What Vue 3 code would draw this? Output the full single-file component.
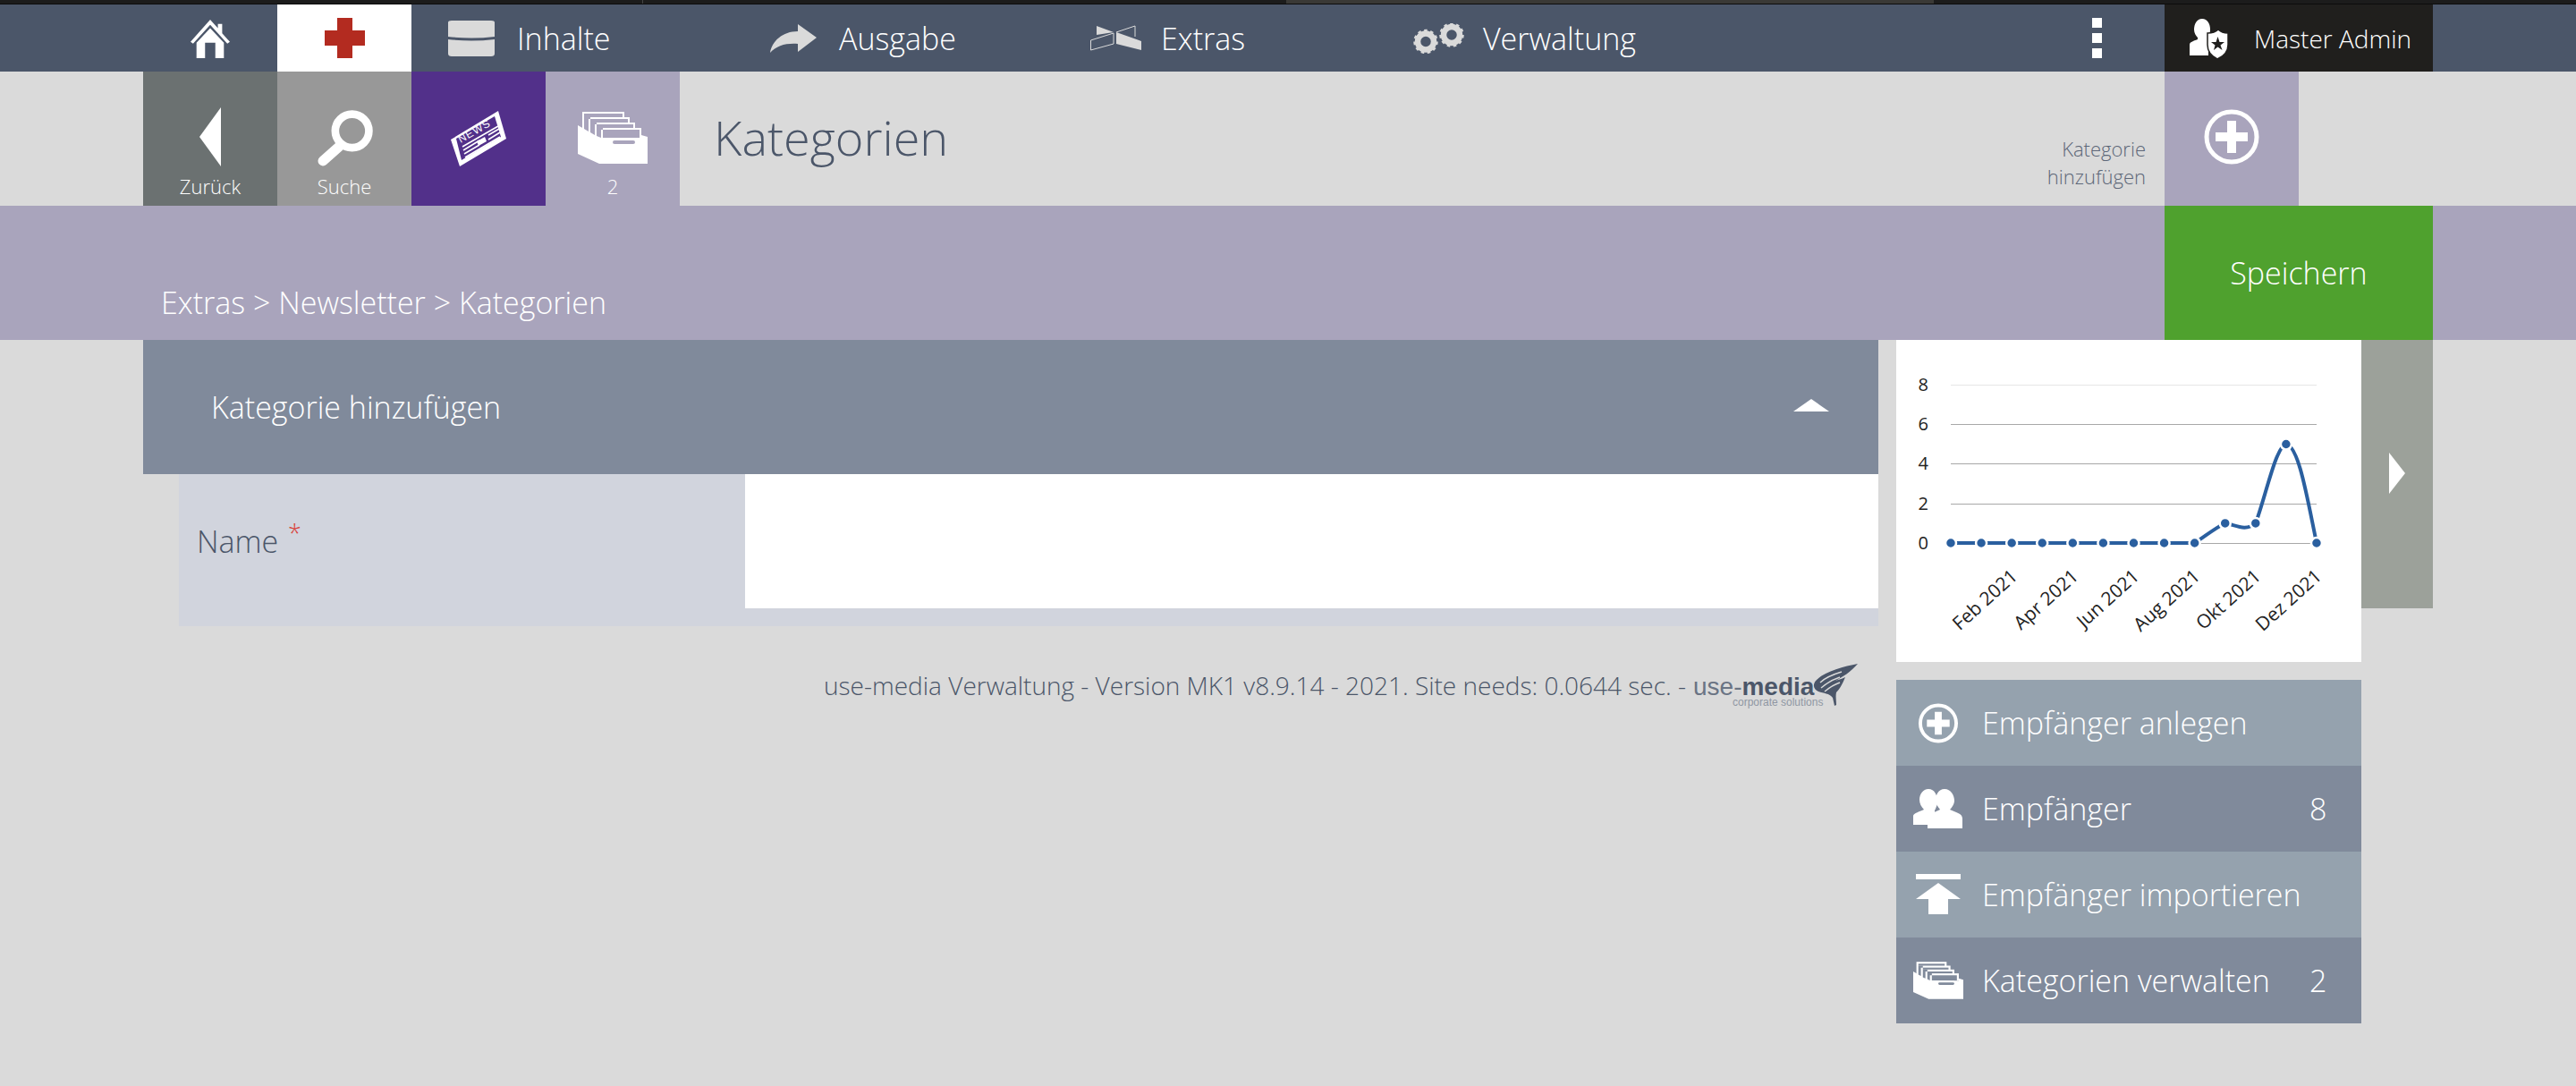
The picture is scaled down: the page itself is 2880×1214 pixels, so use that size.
<script setup>
const navItems = [
  { label: 'Inhalte', icon: 'db' },
  { label: 'Ausgabe', icon: 'share' },
  { label: 'Extras', icon: 'extras' },
  { label: 'Verwaltung', icon: 'gears' },
]
const sideItems = [
  { label: 'Empfänger anlegen', icon: 'plus', cls: 'light' },
  { label: 'Empfänger', icon: 'users', count: 8, cls: 'dark' },
  { label: 'Empfänger importieren', icon: 'import', cls: 'light' },
  { label: 'Kategorien verwalten', icon: 'box', count: 2, cls: 'dark' },
]
const ticksY = [
  { v: 8, y: 50 },
  { v: 6, y: 94 },
  { v: 4, y: 138 },
  { v: 2, y: 183 },
  { v: 0, y: 227 },
]
const xs = Array.from({ length: 13 }, (_, i) => 61 + i * 34.08)
const vals = [0, 0, 0, 0, 0, 0, 0, 0, 0, 1, 1, 5, 0]
const pts = xs.map((x, i) => ({ x, y: 227 - vals[i] * 22.1 }))
const xLabels = [
  { t: 'Feb 2021', x: 137 },
  { t: 'Apr 2021', x: 205 },
  { t: 'Jun 2021', x: 273 },
  { t: 'Aug 2021', x: 341 },
  { t: 'Okt 2021', x: 409 },
  { t: 'Dez 2021', x: 477 },
]
</script>

<template>
  <div class="page">
    <div class="strip"><span class="s1"></span><span class="s2"></span><span class="s3"></span></div>

    <header class="nav">
      <div class="nav-cell home">
        <svg width="46" height="44" viewBox="0 0 48 46"><path d="M24 1 L33 11 V6 H38 V17 L47 27 L44 29 L24 7 L4 29 L1 27 Z M8 28 L24 11 L40 28 V46 H30 V28 H18 V46 H8 Z" fill="#fff"/></svg>
      </div>
      <div class="nav-cell cross">
        <svg width="45" height="45" viewBox="0 0 45 45"><path d="M14 0 H31 V14 H45 V31 H31 V45 H14 V31 H0 V14 H14 Z" fill="#b32b20"/></svg>
      </div>
      <div v-for="n in navItems" :key="n.label" class="nav-item" :class="'ni-' + n.icon">
        <svg v-if="n.icon === 'db'" width="52" height="40" viewBox="0 0 52 40">
          <path d="M0 2 Q0 0 4 0 H48 Q52 0 52 2 V18 Q26 21 0 18 Z M0 21 Q26 24 52 21 V37 Q52 40 48 40 H4 Q0 40 0 37 Z" fill="#dadada"/>
        </svg>
        <svg v-else-if="n.icon === 'share'" width="52" height="32" viewBox="0 0 52 32">
          <path d="M31 0 L52 15 L31 31 V22 C18 21 7 24 0 32 C2 19 14 8 31 8 Z" fill="#dadada"/>
        </svg>
        <svg v-else-if="n.icon === 'extras'" width="57" height="29" viewBox="0 0 57 29">
          <path d="M7 1 L26 8 L7 11 Z M29 8 L57 18 V28 L29 21 Z" fill="#dadada"/>
          <path d="M0.500 17 L26 9 V21 L0.500 28 Z M29 8 L50 1 V13" fill="none" stroke="#dadada" stroke-width="1"/>
        </svg>
        <svg v-else width="57" height="34" viewBox="0 0 57 34">
          <g fill="none" stroke="#dadada">
            <circle cx="14" cy="20.500" r="9" stroke-width="6.500"/>
            <circle cx="14" cy="20.500" r="12" stroke-width="3.500" stroke-dasharray="3.400 3.400"/>
            <circle cx="43" cy="13" r="9" stroke-width="6.500"/>
            <circle cx="43" cy="13" r="12" stroke-width="3.500" stroke-dasharray="3.400 3.400"/>
          </g>
        </svg>
        <span>{{ n.label }}</span>
      </div>
      <div class="dots"><i></i><i></i><i></i></div>
      <div class="admin">
        <svg width="44" height="46" viewBox="0 0 44 46">
          <path d="M14 1 C20 1 23 7 23 13 C23 17 22 20 20 22 V24 L21 25 V42 H0 V30 C0 27 4 26 9 24 V22 C7 20 5 17 5 13 C5 7 8 1 14 1 Z" fill="#fff"/>
          <path d="M32 13 C35 16 39 17 43 17 V30 C43 38 38 43 31 46 C25 43 20 38 20 30 V17 C25 17 29 16 32 13 Z" fill="#fff" stroke="#201f1d" stroke-width="1.500"/>
          <path d="M31.500 21 L33.500 27 H39 L34.500 30.500 L36.500 36 L31.500 32.500 L27 36 L28.500 30.500 L24 27 H29.500 Z" fill="#201f1d"/>
        </svg>
        <span>Master Admin</span>
      </div>
    </header>

    <section class="sub">
      <div class="tile back">
        <svg width="24" height="66" viewBox="0 0 24 66"><path d="M24 0 V66 L0 33 Z" fill="#fff"/></svg>
        <span>Zurück</span>
      </div>
      <div class="tile search">
        <svg class="t3" width="63" height="63" viewBox="0 0 62 62">
          <circle cx="39" cy="23" r="18.500" fill="none" stroke="#fff" stroke-width="8.500"/>
          <path d="M25 40 L7 56" stroke="#fff" stroke-width="11" stroke-linecap="round"/>
        </svg>
        <span>Suche</span>
      </div>
      <div class="tile news">
        <svg class="t3" width="63" height="63" viewBox="0 0 63 63">
          <path d="M0 33 L53 1 L62 32 L10 63 Z" fill="#fff"/>
          <path d="M6 32 L49 7 L56 30 L12 56 Z" fill="#52308a"/>
          <path d="M13 41 L53 18 M14 45 L32 34 M42 28 L54 21 M15 49 L32 39 M42 33 L55 25 M16 53 L55 30" stroke="#fff" stroke-width="1.600"/>
          <path d="M29 35 L38 30 L40 35 L31 40 Z" fill="#fff"/>
          <text class="news-word" transform="translate(11 37) rotate(-30)">NEWS</text>
        </svg>
      </div>
      <div class="tile box">
        <svg class="t5" width="78" height="58" viewBox="0 0 78 58">
          <g fill="#fff">
            <rect x="5" y="0" width="47" height="30"/>
            <rect x="12" y="6" width="46" height="24"/>
            <rect x="19" y="12" width="45" height="18"/>
            <rect x="26" y="18" width="45" height="12"/>
            <path d="M0 15 L26 30 H71 V26 L78 28 V58 H24 L0 47 Z"/>
          </g>
          <g fill="#a9a4bc">
            <rect x="7" y="2" width="43" height="4"/>
            <rect x="14" y="8" width="42" height="4"/>
            <rect x="21" y="14" width="41" height="4"/>
            <rect x="28" y="20" width="41" height="9"/>
            <rect x="39" y="32" width="25" height="4" rx="2"/>
            <path d="M7 2 V19 L12 22 V8 H14 V6 H7 Z"/>
            <path d="M14 8 V23 L19 26 V14 H21 V12 H14 Z"/>
            <path d="M21 14 V27 L26 29 V20 H28 V18 H21 Z"/>
          </g>
        </svg>
        <span>2</span>
      </div>
      <h1 class="title">Kategorien</h1>
      <div class="add-label">Kategorie<br />hinzufügen</div>
      <div class="add-btn">
        <svg width="62" height="62" viewBox="0 0 62 62">
          <circle cx="31" cy="31" r="28" fill="none" stroke="#fff" stroke-width="5"/>
          <path d="M26 13 H36 V26 H49 V36 H36 V49 H26 V36 H13 V26 H26 Z" fill="#fff"/>
        </svg>
      </div>
    </section>

    <section class="crumb">
      <span class="crumb-text">Extras &gt; Newsletter &gt; Kategorien</span>
      <div class="save">Speichern</div>
    </section>

    <main class="body">
      <div class="left">
        <div class="acc">
          <span>Kategorie hinzufügen</span>
          <svg width="40" height="14" viewBox="0 0 40 14"><path d="M0 14 L20 0 L40 14 Z" fill="#fff"/></svg>
        </div>
        <div class="form-row">
          <div class="label">Name <sup>*</sup></div>
          <div class="field"></div>
        </div>
        <div class="foot">
          <span>use-media Verwaltung - Version MK1 v8.9.14 - 2021. Site needs: 0.0644 sec. - </span>
          <span class="logo">
            <span class="logo-name">use-<b>media</b></span>
            <small>corporate solutions</small>
            <svg width="50" height="48" viewBox="0 0 50 48">
              <path d="M50 0 C34 3 12 9 3 19 C-1 24 1 29 6 31 C12 33 18 33 22 38 L24 47 L26 46 C26 40 25 37 26 32 C31 27 34 20 36 15 C30 18 27 18 25 19 C33 15 42 9 50 0 Z" fill="#4b5669"/>
              <path d="M8 21 C14 15 22 12 32 9 M9 27 C16 21 24 17 30 15 M13 31 C19 26 24 23 30 21" fill="none" stroke="#dadada" stroke-width="1.400"/>
            </svg>
          </span>
        </div>
      </div>

      <aside class="right">
        <div class="top-row">
          <div class="chart">
            <svg width="520" height="360" viewBox="0 0 520 360">
              <g v-for="t in ticksY" :key="t.v">
                <line x1="61" x2="470" :y1="t.y + 0.5" :y2="t.y + 0.5" :stroke="t.v === 8 ? '#e6e6e6' : '#a8a8a8'" stroke-width="1" />
                <text x="36" :y="t.y + 7" text-anchor="end" class="tick">{{ t.v }}</text>
              </g>
              <path d="M61 227 H333.600 C345 220 355 211 367.700 205 C378 206 390 215 401.800 205 C413 175 425 117 435.900 117 C450 117 460 180 470 227" fill="none" stroke="#2a5f9f" stroke-width="4"/>
              <circle v-for="(p, i) in pts" :key="i" :cx="p.x" :cy="p.y" r="6" fill="#2a5f9f" stroke="#fff" stroke-width="2.500"/>
              <text v-for="l in xLabels" :key="l.t" :transform="`translate(${l.x} 266) rotate(-42)`" text-anchor="end" class="xl">{{ l.t }}</text>
            </svg>
          </div>
          <div class="next">
            <svg width="18" height="46" viewBox="0 0 18 46"><path d="M0 0 L18 23 L0 46 Z" fill="#fff"/></svg>
          </div>
        </div>
        <ul class="side">
          <li v-for="s in sideItems" :key="s.label" :class="s.cls">
            <span class="side-icon">
              <svg v-if="s.icon === 'plus'" width="46" height="45" viewBox="0 0 46 46">
                <circle cx="23" cy="23" r="20.500" fill="none" stroke="#fff" stroke-width="4"/>
                <path d="M19 10 H27 V19 H36 V27 H27 V36 H19 V27 H10 V19 H19 Z" fill="#fff"/>
              </svg>
              <svg v-else-if="s.icon === 'users'" width="56" height="44" viewBox="0 0 56 44">
                <path d="M17 0 C24 0 27 7 27 14 C27 18 25 22 24 24 V40 H0 V30 C0 27 8 25 12 23 C9 20 7 16 7 12 C7 6 11 0 17 0 Z" fill="#fff"/>
                <path d="M35 0 C42 0 46 7 46 13 C46 17 43 21 41 23 C47 26 55 27 55 33 V44 H16 V33 C16 27 25 26 30 23 C28 20 25 17 25 13 C25 7 28 0 35 0 Z" fill="#fff"/>
              </svg>
              <svg v-else-if="s.icon === 'import'" width="50" height="46" viewBox="0 0 50 46">
                <rect x="0" y="0" width="50" height="6" fill="#fff"/>
                <path d="M25 10 L50 28 H36 V45 H14 V28 H0 Z" fill="#fff"/>
              </svg>
              <svg v-else width="56" height="42" viewBox="0 0 78 58">
                <g fill="#fff">
                  <rect x="5" y="0" width="47" height="30"/>
                  <rect x="12" y="6" width="46" height="24"/>
                  <rect x="19" y="12" width="45" height="18"/>
                  <rect x="26" y="18" width="45" height="12"/>
                  <path d="M0 15 L26 30 H71 V26 L78 28 V58 H24 L0 47 Z"/>
                </g>
                <g fill="#808a9b">
                  <rect x="8" y="3" width="41" height="3"/>
                  <rect x="15" y="9" width="40" height="3"/>
                  <rect x="22" y="15" width="39" height="3"/>
                  <rect x="29" y="21" width="39" height="8"/>
                  <rect x="39" y="32" width="25" height="4" rx="2"/>
                  <path d="M8 3 V20 L12 22 V9 H15 V6 H8 Z"/>
                  <path d="M15 9 V24 L19 26 V15 H22 V12 H15 Z"/>
                  <path d="M22 15 V27 L26 29 V21 H29 V18 H22 Z"/>
                </g>
              </svg>
            </span>
            <span class="side-label">{{ s.label }}</span>
            <span v-if="s.count" class="side-count">{{ s.count }}</span>
          </li>
        </ul>
      </aside>
    </main>
  </div>
</template>

<style>
html, body { margin: 0; background: #dadada; }
</style>

<style scoped>
.page {
  width: 2880px;
  height: 1214px;
  overflow: hidden;
  background: #dadada;
  font-family: "Open Sans", "Noto Sans", sans-serif;
  font-weight: 300;
  color: #4b5669;
}
.strip { height: 5px; background: #1c1c1c; display: flex; border-bottom: 1px solid #0c0c0c; box-sizing: border-box; }
.s1 { width: 718px; }
.s2 { width: 720px; border-left: 1px solid #444; box-sizing: border-box; }
.s3 { width: 724px; background: #3a3936; }
.nav { height: 75px; background: #4b5669; display: flex; align-items: stretch; padding: 0 160px; color: #fff; }
.nav-cell { width: 150px; display: flex; align-items: center; justify-content: center; }
.cross { background: #fff; }
.nav-item { display: flex; align-items: center; gap: 25px; font-size: 34px; }
.ni-db { width: 360px; margin-left: 41px; }
.ni-share { width: 358px; }
.ni-extras { width: 361px; gap: 22px; }
.ni-gears { gap: 21px; }
.dots { width: 152px; margin-left: auto; display: flex; flex-direction: column; gap: 6px; align-items: center; justify-content: center; }
.dots i { width: 11px; height: 11px; background: #fff; display: block; }
.admin { width: 300px; background: #201f1d; display: flex; align-items: center; gap: 28px; padding-left: 28px; box-sizing: border-box; font-size: 28px; }
.sub { height: 150px; display: flex; padding: 0 310px 0 160px; align-items: stretch; }
.tile { width: 150px; position: relative; color: #fff; display: flex; flex-direction: column; align-items: center; padding-top: 40px; box-sizing: border-box; font-size: 22px; }
.tile span { position: absolute; bottom: 7px; line-height: 30px; }
.t3 { margin-top: 3px; }
.t5 { margin-top: 5px; }
.back { background: #6b7171; }
.search { background: #989898; }
.news { background: #52308a; }
.box { background: #a9a4bc; }
.news-word { font-size: 12px; font-family: "Liberation Sans", sans-serif; fill: #fff; letter-spacing: 1px; }
.title { margin: -2px 0 0 38px; flex: 1; font-size: 54px; font-weight: 300; line-height: 150px; color: #4b5669; }
.add-label { align-self: flex-end; padding-bottom: 17px; text-align: right; font-size: 22px; line-height: 31px; color: #5d6778; }
.add-btn { width: 150px; margin-left: 21px; background: #a9a4bc; display: flex; align-items: center; justify-content: center; }
.add-btn svg { margin-top: -4px; }
.crumb { height: 150px; background: #a9a4bc; display: flex; justify-content: space-between; padding: 0 160px 0 180px; color: #fff; }
.crumb-text { align-self: flex-end; padding-bottom: 20px; font-size: 34px; line-height: 44px; }
.save { width: 300px; background: #4fa12e; display: flex; align-items: center; justify-content: center; font-size: 34px; }
.body { display: flex; padding-left: 160px; align-items: flex-start; }
.left { width: 1940px; flex: none; }
.acc { height: 150px; background: #808a9b; color: #fff; display: flex; align-items: center; justify-content: space-between; padding: 0 55px 0 76px; font-size: 34px; }
.acc svg { margin-top: -4px; }
.form-row { margin-left: 40px; height: 170px; background: #d1d4dd; display: flex; align-items: flex-start; }
.label { width: 633px; height: 150px; flex: none; box-sizing: border-box; padding-left: 20px; font-size: 34px; line-height: 150px; }
.label sup { color: #d9433a; font-size: 27px; line-height: 0; vertical-align: 12px; margin-left: 2px; }
.field { flex: 1; height: 150px; background: #fff; }
.foot { display: flex; justify-content: flex-end; align-items: center; margin-top: 41px; padding-right: 23px; font-size: 28px; height: 50px; }
.logo { position: relative; display: inline-block; width: 184px; height: 50px; margin-left: 8px; }
.logo-name { position: absolute; left: 0; top: 17px; font-family: "Liberation Sans", sans-serif; font-size: 28px; line-height: 20px; white-space: nowrap; color: #6a7484; }
.logo-name b { font-weight: 700; color: #4b5669; }
.logo small { position: absolute; left: 44px; top: 37px; font-family: "Liberation Sans", sans-serif; font-size: 12px; line-height: 14px; color: #8f97a3; white-space: nowrap; }
.logo svg { position: absolute; right: 0; top: 1px; }
.right { width: 600px; margin-left: 20px; flex: none; }
.top-row { display: flex; align-items: flex-start; }
.chart { width: 520px; height: 360px; background: #fff; }
.chart svg { display: block; }
.tick { font-size: 20px; font-weight: 400; fill: #222; font-family: "Open Sans", sans-serif; }
.xl { font-size: 21px; font-weight: 400; fill: #222; font-family: "Open Sans", sans-serif; }
.next { width: 80px; height: 300px; background: #9ca19a; display: flex; align-items: center; justify-content: center; }
.next svg { margin-top: -3px; }
.side { list-style: none; margin: 20px 0 0; padding: 0; width: 520px; color: #fff; }
.side li { height: 96px; display: flex; align-items: center; font-size: 34px; position: relative; padding-left: 96px; box-sizing: border-box; }
.side .light { background: #95a2ae; }
.side .dark { background: #808a9b; }
.side-icon { position: absolute; left: 19px; width: 56px; top: 0; bottom: 0; display: flex; align-items: center; justify-content: center; }
.side-count { position: absolute; left: 462px; }
</style>
